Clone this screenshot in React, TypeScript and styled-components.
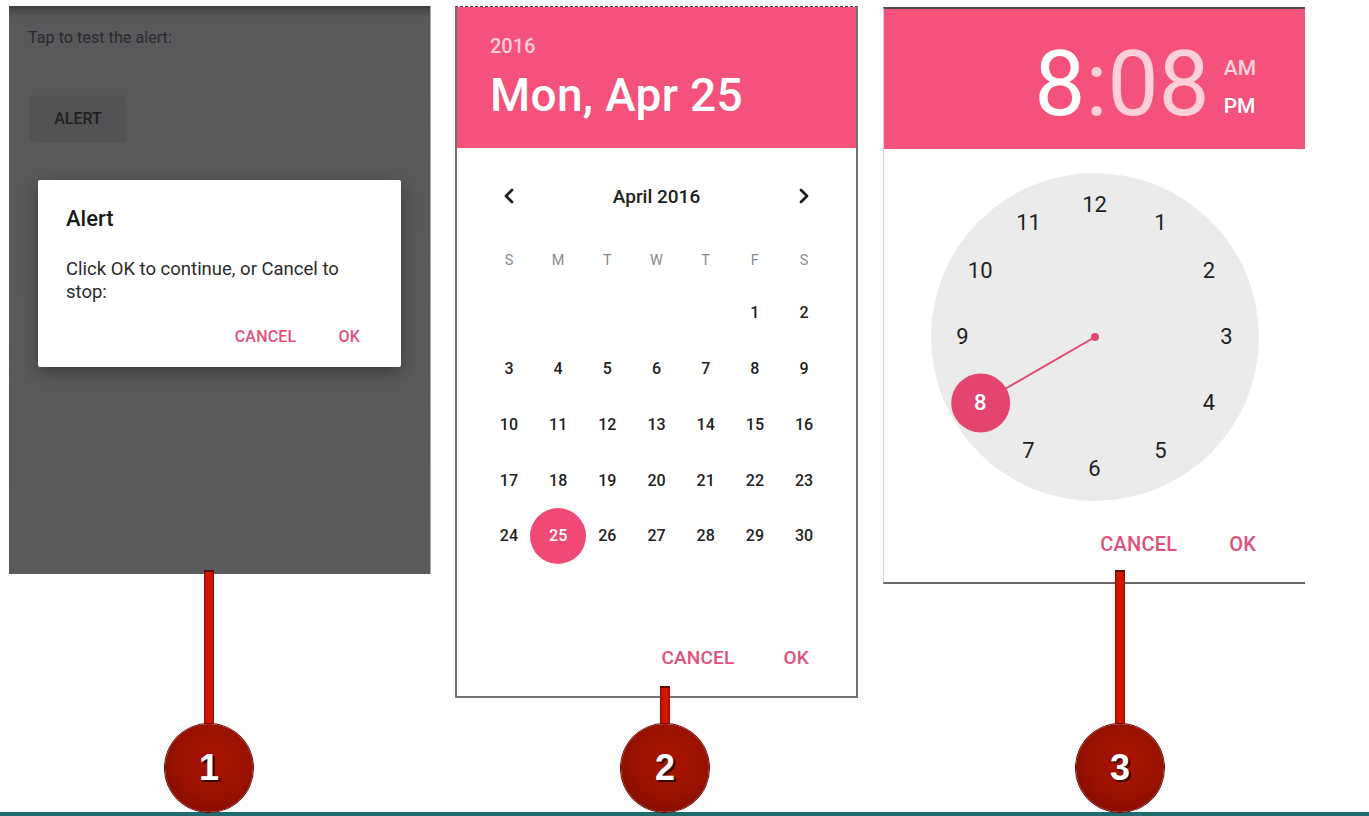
import React from "react";
import styled, { createGlobalStyle } from "styled-components";
import { ChevronLeft, ChevronRight } from "lucide-react";

const GlobalStyle = createGlobalStyle`
  html, body { margin: 0; padding: 0; background: #ffffff; }
  body { font-family: Roboto, "Noto Sans", Arial, sans-serif; }
  * { box-sizing: border-box; }
`;

const PINK = "#f4527a";
const ACTION = "#e0517a";

const Page = styled.div`
  width: 1369px;
  height: 816px;
  display: flex;
  flex-direction: column;
  background: #fdfdfe;
  overflow: hidden;
`;

const Stage = styled.div`
  flex: 1;
  display: flex;
  align-items: stretch;
  padding: 6px 0 0 9px;
`;

const TealBar = styled.div`
  height: 4px;
  background: #1f6b70;
`;

const Column = styled.div<{ $width: number; $before: number }>`
  width: ${(p) => p.$width}px;
  margin-left: ${(p) => p.$before}px;
  display: flex;
  flex-direction: column;
`;

/* ---------- markers ---------- */
const Marker = styled.div<{ $offset: number; $overlap: number }>`
  flex: 1;
  width: 88px;
  margin-left: ${(p) => p.$offset}px;
  margin-top: -${(p) => p.$overlap}px;
  display: flex;
  flex-direction: column;
  align-items: center;
  position: relative;
  z-index: 2;
`;

const Connector = styled.div`
  flex: 1;
  width: 10px;
  background: linear-gradient(to right, #8a0c00 0%, #cf1400 22%, #d61500 78%, #8a0c00 100%);
  border-top: 2px solid #5c0900;
`;

const Badge = styled.div`
  width: 88px;
  height: 88px;
  flex-shrink: 0;
  border-radius: 50%;
  background: radial-gradient(circle at 55% 42%, #a81400 0%, #9a1100 50%, #860e00 78%, #5e0700 100%);
  box-shadow: 0 0 0 1px #6a0900;
  display: flex;
  align-items: center;
  justify-content: center;
  color: #ffffff;
  font-family: "Liberation Sans", Arial, sans-serif;
  font-weight: 700;
  font-size: 36px;
  text-shadow: 2px 2px 0 #3a0500;
`;

/* ---------- panel 1 : alert ---------- */
const AlertScreen = styled.div`
  height: 568px;
  background: linear-gradient(#3b3b3d 0px, #4c4b4e 4px, #59585b 12px, #5b5a5d 100%);
  border-right: 1px solid #a9a9ab;
  padding: 22px 0 0 19px;
  display: flex;
  flex-direction: column;
  align-items: flex-start;
`;

const Hint = styled.div`
  font-size: 16.2px;
  line-height: 20px;
  color: #2a2a2c;
`;

const RaisedButton = styled.div`
  margin: 48px 0 0 3px;
  width: 94px;
  height: 44px;
  border-radius: 2px;
  background: #525154;
  box-shadow: 0 1px 3px rgba(0, 0, 0, 0.18);
  display: flex;
  align-items: center;
  justify-content: center;
  font-size: 16px;
  font-weight: 500;
  color: #1f1f20;
`;

const Dialog = styled.div`
  margin: 40px 0 0 10px;
  width: 363px;
  background: #ffffff;
  border-radius: 2px;
  box-shadow: 0 6px 18px rgba(0, 0, 0, 0.35);
  padding: 27px 0 12px 28px;
`;

const DialogTitle = styled.div`
  font-size: 22px;
  line-height: 24px;
  font-weight: 500;
  color: #1b1b1b;
`;

const DialogBody = styled.div`
  margin-top: 27px;
  max-width: 300px;
  font-size: 18.5px;
  line-height: 23px;
  color: #2b2b2b;
`;

const ActionRow = styled.div<{ $gap: number; $pad: number; $top?: number }>`
  display: flex;
  justify-content: flex-end;
  align-items: center;
  gap: ${(p) => p.$gap}px;
  padding-right: ${(p) => p.$pad}px;
  margin-top: ${(p) => (p.$top === undefined ? "auto" : `${p.$top}px`)};
  height: 36px;
`;

const ActionButton = styled.span<{ $size: number }>`
  font-size: ${(p) => p.$size}px;
  font-weight: 500;
  color: ${ACTION};
  line-height: 36px;
  letter-spacing: 0.2px;
`;

/* ---------- panel 2 : date ---------- */
const DatePanel = styled.div`
  height: 692px;
  background: #ffffff;
  border: 2px solid #727272;
  border-top: 1px dashed #3e3e3e;
  display: flex;
  flex-direction: column;
  padding-bottom: 20px;
`;

const DateHeader = styled.div`
  height: 141px;
  background: ${PINK};
  padding: 28px 0 0 33px;
  flex-shrink: 0;
`;

const YearText = styled.div`
  font-size: 20px;
  line-height: 22px;
  font-weight: 500;
  color: rgba(255, 255, 255, 0.72);
`;

const BigDate = styled.div`
  margin-top: 12px;
  font-size: 46px;
  line-height: 52px;
  font-weight: 500;
  color: #ffffff;
  letter-spacing: 0.3px;
`;

const WeekGrid = styled.div<{ $top: number; $row: number }>`
  display: grid;
  grid-template-columns: repeat(7, 49.2px);
  grid-auto-rows: ${(p) => p.$row}px;
  justify-content: center;
  margin-top: ${(p) => p.$top}px;
`;

const NavCell = styled.div`
  display: flex;
  align-items: center;
  justify-content: center;
  color: #1e1e1e;
`;

const MonthTitle = styled.div`
  grid-column: 2 / 7;
  display: flex;
  align-items: center;
  justify-content: center;
  font-size: 19px;
  font-weight: 500;
  color: #1e1e1e;
`;

const WeekdayCell = styled.div`
  display: flex;
  align-items: center;
  justify-content: center;
  font-size: 14.5px;
  color: #8a8a8a;
`;

const DayCell = styled.div<{ $selected?: boolean }>`
  display: flex;
  align-items: center;
  justify-content: center;
  position: relative;
  padding-top: 2px;
  font-size: 16px;
  font-weight: 500;
  color: ${(p) => (p.$selected ? "#ffffff" : "#222222")};
  z-index: 0;
  &::before {
    content: "";
    display: ${(p) => (p.$selected ? "block" : "none")};
    position: absolute;
    width: 56px;
    height: 56px;
    border-radius: 50%;
    background: #f04a74;
    left: 50%;
    top: calc(50% + 1px);
    transform: translate(-50%, -50%);
    z-index: -1;
  }
`;

/* ---------- panel 3 : time ---------- */
const TimePanel = styled.div`
  margin-top: 1px;
  height: 577px;
  background: #ffffff;
  border-top: 2px solid #4a4a4a;
  border-left: 1px solid #d4d4d4;
  border-bottom: 2px solid #676767;
  display: flex;
  flex-direction: column;
`;

const TimeHeader = styled.div`
  height: 140px;
  flex-shrink: 0;
  background: ${PINK};
  display: flex;
  justify-content: flex-end;
  align-items: flex-start;
  padding: 30px 49px 0 0;
`;

const TimeDigits = styled.div`
  font-size: 91px;
  line-height: 90px;
  font-weight: 400;
  color: #ffffff;
`;

const Dim = styled.span`
  color: rgba(255, 255, 255, 0.72);
`;

const Meridiem = styled.div`
  margin: 10px 0 0 14px;
  display: flex;
  flex-direction: column;
`;

const MeridiemItem = styled.span<{ $active?: boolean }>`
  font-size: 21px;
  line-height: 38px;
  font-weight: 500;
  color: ${(p) => (p.$active ? "#ffffff" : "rgba(255,255,255,0.75)")};
`;

const ClockFace = styled.div`
  position: relative;
  width: 328px;
  height: 328px;
  margin: 24px auto 0;
  border-radius: 50%;
  background: #ebebec;
  flex-shrink: 0;
`;

const HandLayer = styled.svg`
  position: absolute;
  inset: 0;
`;

const ClockNumber = styled.span<{ $selected?: boolean }>`
  position: absolute;
  transform: translate(-50%, -50%);
  font-size: 22px;
  line-height: 24px;
  color: ${(p) => (p.$selected ? "#ffffff" : "#1f1f1f")};
  font-weight: ${(p) => (p.$selected ? 500 : 400)};
`;

const weekdays = ["S", "M", "T", "W", "T", "F", "S"];
const days: (number | null)[] = [null, null, null, null, null, 1, 2];
for (let d = 3; d <= 30; d++) days.push(d);

const C = 164;
const R = 132;
const pos = (h: number) => {
  const a = (h % 12) * (Math.PI / 6);
  return { x: C + R * Math.sin(a), y: C - R * Math.cos(a) };
};

export default function App() {
  const sel = pos(8);
  const dx = sel.x - C;
  const dy = sel.y - C;
  const len = Math.hypot(dx, dy);
  const endX = C + (dx / len) * (len - 29);
  const endY = C + (dy / len) * (len - 29);

  return (
    <Page>
      <GlobalStyle />
      <Stage>
        <Column $width={422} $before={0}>
          <AlertScreen>
            <Hint>Tap to test the alert:</Hint>
            <RaisedButton>ALERT</RaisedButton>
            <Dialog>
              <DialogTitle>Alert</DialogTitle>
              <DialogBody>Click OK to continue, or Cancel to stop:</DialogBody>
              <ActionRow $gap={42} $pad={41} $top={15}>
                <ActionButton $size={16}>CANCEL</ActionButton>
                <ActionButton $size={16}>OK</ActionButton>
              </ActionRow>
            </Dialog>
          </AlertScreen>
          <Marker $offset={156} $overlap={4}>
            <Connector />
            <Badge>1</Badge>
          </Marker>
        </Column>

        <Column $width={403} $before={24}>
          <DatePanel>
            <DateHeader>
              <YearText>2016</YearText>
              <BigDate>Mon, Apr 25</BigDate>
            </DateHeader>
            <WeekGrid $top={28} $row={40}>
              <NavCell>
                <ChevronLeft size={24} strokeWidth={2.8} />
              </NavCell>
              <MonthTitle>April 2016</MonthTitle>
              <NavCell>
                <ChevronRight size={24} strokeWidth={2.8} />
              </NavCell>
            </WeekGrid>
            <WeekGrid $top={24} $row={40}>
              {weekdays.map((w, i) => (
                <WeekdayCell key={i}>{w}</WeekdayCell>
              ))}
            </WeekGrid>
            <WeekGrid $top={4} $row={55.75}>
              {days.map((d, i) => (
                <DayCell key={i} $selected={d === 25}>
                  {d ?? ""}
                </DayCell>
              ))}
            </WeekGrid>
            <ActionRow $gap={49} $pad={47}>
              <ActionButton $size={19}>CANCEL</ActionButton>
              <ActionButton $size={19}>OK</ActionButton>
            </ActionRow>
          </DatePanel>
          <Marker $offset={166} $overlap={12}>
            <Connector />
            <Badge>2</Badge>
          </Marker>
        </Column>

        <Column $width={422} $before={25}>
          <TimePanel>
            <TimeHeader>
              <TimeDigits>
                8<Dim>:08</Dim>
              </TimeDigits>
              <Meridiem>
                <MeridiemItem>AM</MeridiemItem>
                <MeridiemItem $active>PM</MeridiemItem>
              </Meridiem>
            </TimeHeader>
            <ClockFace>
              <HandLayer width={328} height={328} viewBox="0 0 328 328">
                <line x1={C} y1={C} x2={endX} y2={endY} stroke="#e3456e" strokeWidth={2} />
                <circle cx={C} cy={C} r={4} fill="#e3456e" />
                <circle cx={sel.x} cy={sel.y} r={29.5} fill="#e3456e" />
              </HandLayer>
              {Array.from({ length: 12 }, (_, i) => i + 1).map((h) => {
                const p = pos(h);
                return (
                  <ClockNumber key={h} $selected={h === 8} style={{ left: p.x, top: p.y }}>
                    {h}
                  </ClockNumber>
                );
              })}
            </ClockFace>
            <ActionRow $gap={52} $pad={49} $top={25}>
              <ActionButton $size={20}>CANCEL</ActionButton>
              <ActionButton $size={20}>OK</ActionButton>
            </ActionRow>
          </TimePanel>
          <Marker $offset={193} $overlap={14}>
            <Connector />
            <Badge>3</Badge>
          </Marker>
        </Column>
      </Stage>
      <TealBar />
    </Page>
  );
}
